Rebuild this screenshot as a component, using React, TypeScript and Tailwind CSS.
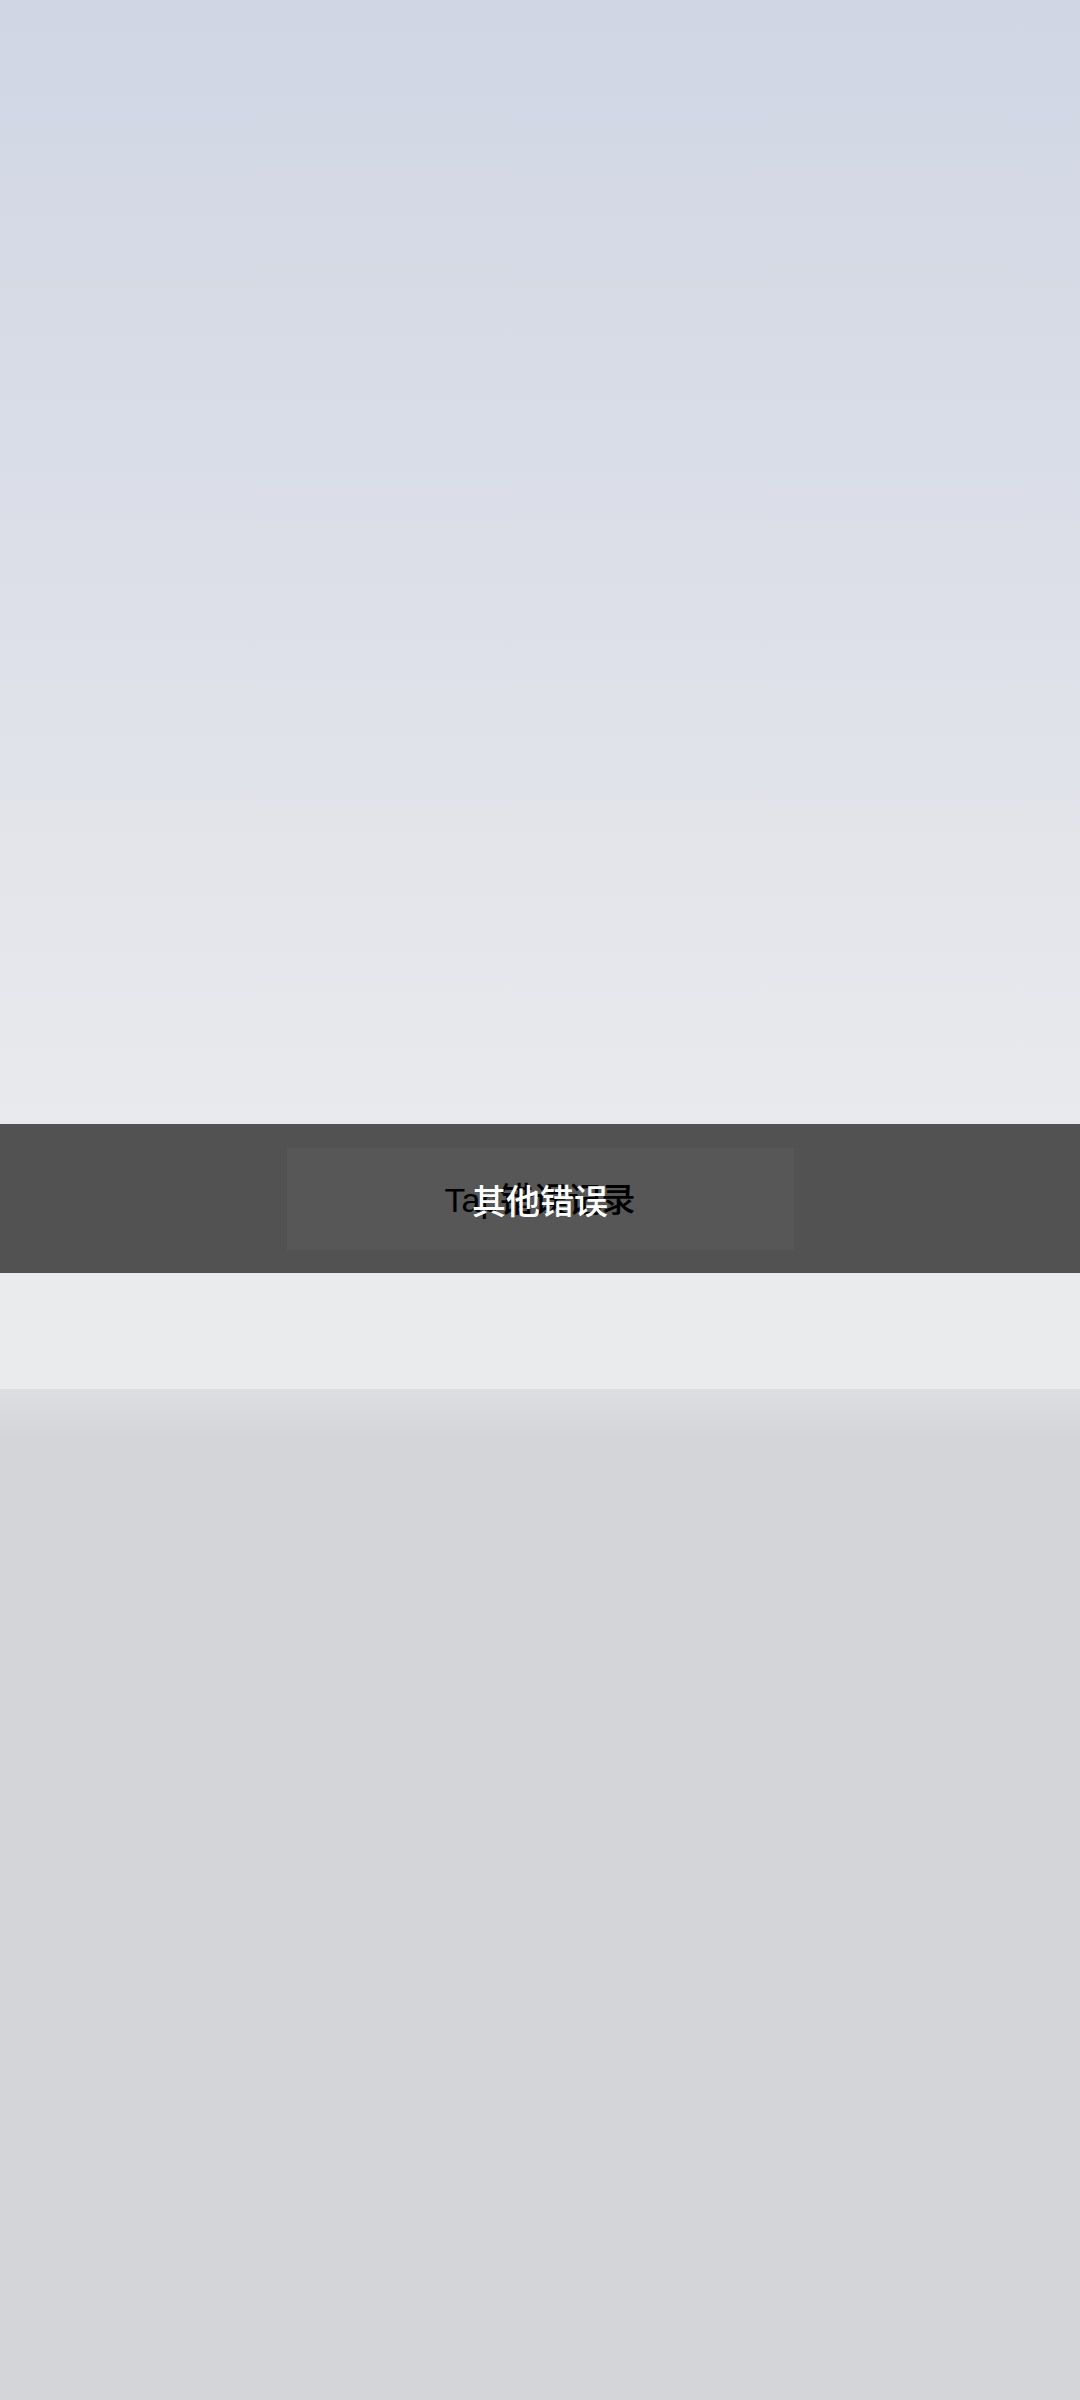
export default function App() {
  return (
    <div className="flex flex-col w-[1080px] h-[2400px] overflow-hidden">
      {/* top backdrop */}
      <div className="h-[1124px] shrink-0 bg-gradient-to-b from-[#d0d6e4] via-[#dcdfe8] to-[#e9eaed]" />

      {/* toast band: translated label sits over the original one, as in the capture */}
      <div className="h-[149px] shrink-0 bg-[#525252] flex items-center justify-center">
        <div className="w-[507px] h-[102px] bg-[#575757] flex items-center justify-center">
          <div className="relative leading-none pt-[2px]">
            <span className="text-[34px] font-medium text-black whitespace-nowrap font-['Liberation_Sans','Noto_Sans_CJK_SC',sans-serif]">
              Tap错误记录
            </span>
            <span className="absolute inset-0 pt-[2px] flex items-center justify-center text-[34px] font-medium text-white whitespace-nowrap font-['Noto_Sans_CJK_SC',sans-serif]">
              其他错误
            </span>
          </div>
        </div>
      </div>

      <div className="h-[116px] shrink-0 bg-[#eaebed]" />
      <div className="h-[50px] shrink-0 bg-gradient-to-b from-[#dddee2] to-[#d4d5d9]" />
      <div className="flex-1 bg-[#d4d5d9]" />
    </div>
  )
}
